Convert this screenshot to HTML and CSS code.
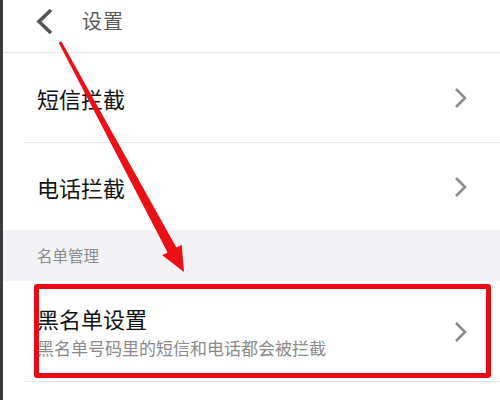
FILE: index.html
```html
<!DOCTYPE html>
<html lang="zh-CN">
<head>
<meta charset="utf-8">
<link rel="stylesheet" href="styles.css">
</head>
<body>
<div class="screen">
  <div class="strip"></div>
  <div class="app">
    <header class="topbar">
      <svg class="back" width="20" height="28" viewBox="0 0 20 28"><polyline points="16,2 4,13.5 16,25" fill="none" stroke="#555" stroke-width="3.6" stroke-linejoin="miter"/></svg>
      <span class="title">设置</span>
    </header>
    <div class="row row1">
      <span class="label">短信拦截</span>
      <svg class="chev" width="14" height="22" viewBox="0 0 14 22"><polyline points="2,2 11,11 2,20" fill="none" stroke="#8c8c8c" stroke-width="2.6"/></svg>
    </div>
    <div class="row row2">
      <span class="label">电话拦截</span>
      <svg class="chev" width="14" height="22" viewBox="0 0 14 22"><polyline points="2,2 11,11 2,20" fill="none" stroke="#8c8c8c" stroke-width="2.6"/></svg>
    </div>
    <div class="section">名单管理</div>
    <div class="row row3">
      <div class="texts">
        <span class="label">黑名单设置</span>
        <span class="sub">黑名单号码里的短信和电话都会被拦截</span>
      </div>
      <svg class="chev" width="14" height="22" viewBox="0 0 14 22"><polyline points="2,2 11,11 2,20" fill="none" stroke="#8c8c8c" stroke-width="2.6"/></svg>
    </div>
  </div>
  <div class="highlight"></div>
  <svg class="arrow" width="500" height="400" viewBox="0 0 500 400">
    <polygon points="58.7,42.7 61.3,41.3 176.4,247.6 181.7,244.8 184,272 162.3,255.2 167.6,252.4" fill="#ec0f16"/>
  </svg>
</div>
</body>
</html>
```

FILE: styles.css
```css
* { box-sizing: border-box; }
html, body { margin: 0; padding: 0; }
body {
  width: 500px;
  height: 400px;
  overflow: hidden;
  background: #fff;
  font-family: "Noto Sans CJK SC", "Noto Sans", sans-serif;
}
.screen {
  position: relative;
  display: flex;
  width: 500px;
  height: 400px;
}
.strip {
  width: 3px;
  flex: none;
  background: #3b3b3d;
}
.app {
  flex: 1;
  display: flex;
  flex-direction: column;
  background: #fff;
}
.topbar {
  height: 53px;
  flex: none;
  display: flex;
  align-items: flex-start;
  padding: 8px 0 0 32px;
  border-bottom: 1px solid #e6e6e6;
}
.back { display: block; }
.title {
  margin-left: 27px;
  font-size: 20px;
  line-height: 26px;
  color: #5a5a5a;
  letter-spacing: 1px;
}
.row {
  display: flex;
  align-items: center;
  justify-content: space-between;
  margin-left: 22px;
  padding: 0 32px 0 12px;
  border-bottom: 1px solid #e8e8e8;
}
.row1 { height: 90px; }
.row2 { height: 87px; border-bottom: none; }
.row3 { height: 101px; padding-top: 2px; }
.label {
  font-size: 22px;
  line-height: 28px;
  color: #111;
}
.chev { display: block; }
.section {
  height: 51px;
  flex: none;
  background: #f3f2f5;
  padding: 14px 0 0 34px;
  font-size: 15.5px;
  line-height: 22px;
  color: #8a8a8a;
}
.texts {
  display: flex;
  flex-direction: column;
  gap: 2px;
}
.row3 .label { line-height: 30px; }
.sub {
  font-size: 17px;
  line-height: 26px;
  color: #8a8a8a;
}
.highlight {
  position: absolute;
  left: 34px;
  top: 284px;
  width: 457px;
  height: 94px;
  border: 5px solid #ea0a14;
  border-radius: 3px;
}
.arrow {
  position: absolute;
  left: 0;
  top: 0;
}
```
